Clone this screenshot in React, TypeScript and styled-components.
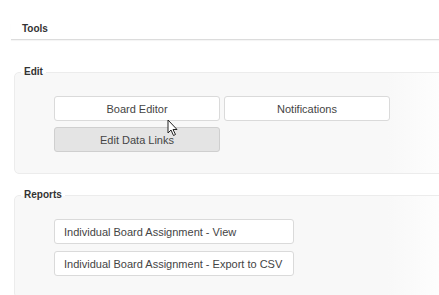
import styled, { createGlobalStyle } from 'styled-components'

const GlobalStyle = createGlobalStyle`
  html, body {
    margin: 0;
    padding: 0;
    background: #ffffff;
  }
  body {
    font-family: "Liberation Sans", Arial, sans-serif;
    color: #333;
    overflow: hidden;
  }
`

const Page = styled.div`
  position: relative;
  width: 439px;
  height: 295px;
  padding-top: 23px;
  box-sizing: border-box;
  overflow: hidden;
`

const Header = styled.div`
  margin-left: 11px;
  padding: 0 0 4px 11px;
  font-size: 10px;
  line-height: 12px;
  font-weight: bold;
  color: #333;
  border-bottom: 1px solid #dcdcdc;
  box-shadow: 0 1px 1px rgba(0, 0, 0, 0.04);
`

const Section = styled.fieldset<{ $top: number }>`
  margin: ${(p) => p.$top}px -20px 0 14px;
  padding: 18px 0 21px 39px;
  border: 1px solid #ececec;
  border-radius: 5px;
  background: linear-gradient(to right, #f8f8f8 0%, #f8f8f8 84%, #ffffff 100%);
  min-width: 0;
`

const Legend = styled.legend`
  margin-left: -33px;
  padding: 0 3px;
  font-size: 10px;
  line-height: 12px;
  font-weight: bold;
  color: #333;
`

const ButtonGrid = styled.div<{ $cols: number; $width: number; $gap: number }>`
  position: relative;
  display: grid;
  grid-template-columns: repeat(${(p) => p.$cols}, ${(p) => p.$width}px);
  column-gap: 4px;
  row-gap: ${(p) => p.$gap}px;
`

const Button = styled.button<{ $active?: boolean; $left?: boolean }>`
  height: 25px;
  margin: 0;
  padding: 0 0 0 ${(p) => (p.$left ? '9px' : '0')};
  text-align: ${(p) => (p.$left ? 'left' : 'center')};
  font-family: "Liberation Sans", Arial, sans-serif;
  font-size: 11px;
  color: #444;
  background: ${(p) => (p.$active ? '#e4e4e4' : '#ffffff')};
  border: 1px solid ${(p) => (p.$active ? '#cfcfcf' : '#dadada')};
  border-radius: 3px;
  cursor: pointer;
`

const Cursor = styled.svg`
  position: absolute;
  left: 113px;
  top: 23px;
  pointer-events: none;
`

export default function App() {
  return (
    <Page>
      <GlobalStyle />
      <Header>Tools</Header>
      <Section $top={26}>
        <Legend>Edit</Legend>
        <ButtonGrid $cols={2} $width={166} $gap={6}>
          <Button>Board Editor</Button>
          <Button>Notifications</Button>
          <Button $active>Edit Data Links</Button>
          <Cursor width="12" height="18" viewBox="0 0 12 18">
            <path d="M1 1 L1 14 L4 11 L6.5 16.5 L8.5 15.5 L6 10.5 L10 10.5 Z" fill="#fff" stroke="#222" strokeWidth="1" strokeLinejoin="round" />
          </Cursor>
        </ButtonGrid>
      </Section>
      <Section $top={15}>
        <Legend>Reports</Legend>
        <ButtonGrid $cols={1} $width={240} $gap={7}>
          <Button $left>Individual Board Assignment - View</Button>
          <Button $left>Individual Board Assignment - Export to CSV</Button>
        </ButtonGrid>
      </Section>
    </Page>
  )
}
